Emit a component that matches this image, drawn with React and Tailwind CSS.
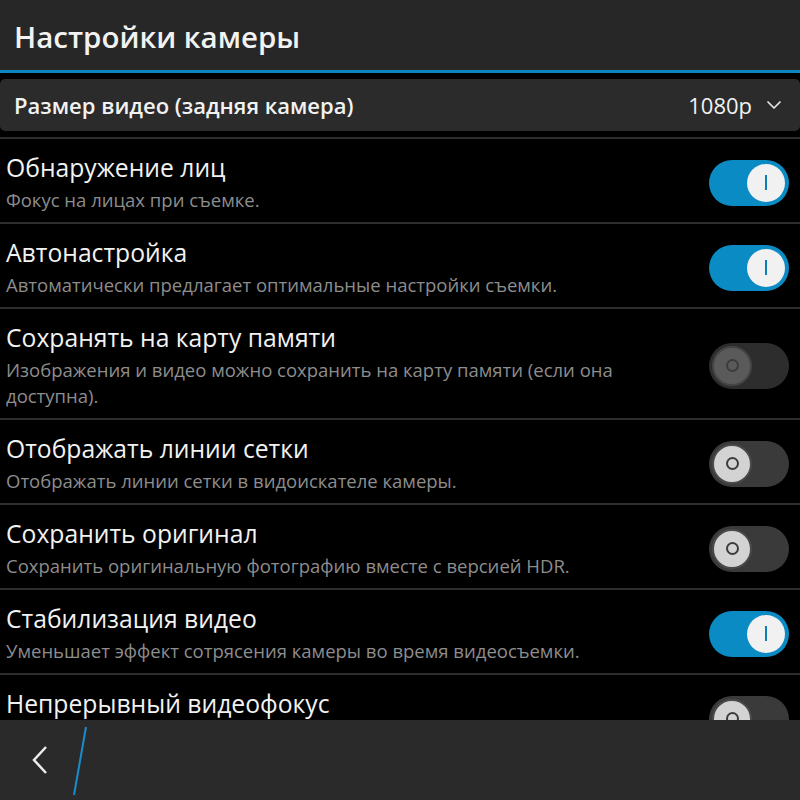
import { ChevronDown } from 'lucide-react';

const settings = [
  { title: 'Обнаружение лиц', desc: 'Фокус на лицах при съемке.', state: 'on' },
  { title: 'Автонастройка', desc: 'Автоматически предлагает оптимальные настройки съемки.', state: 'on' },
  {
    title: 'Сохранять на карту памяти',
    desc: 'Изображения и видео можно сохранить на карту памяти (если она доступна).',
    state: 'disabled',
  },
  { title: 'Отображать линии сетки', desc: 'Отображать линии сетки в видоискателе камеры.', state: 'off' },
  { title: 'Сохранить оригинал', desc: 'Сохранить оригинальную фотографию вместе с версией HDR.', state: 'off' },
  { title: 'Стабилизация видео', desc: 'Уменьшает эффект сотрясения камеры во время видеосъемки.', state: 'on' },
  { title: 'Непрерывный видеофокус', desc: 'Постоянная фокусировка во время видеосъемки.', state: 'off' },
];

function Toggle({ state }) {
  if (state === 'on') {
    return (
      <div className="w-[80px] h-[46px] rounded-full bg-[#0b8bc4] flex items-center justify-end pr-[4px] shrink-0">
        <div className="w-[38px] h-[38px] rounded-full bg-[#f1f1f1] flex items-center justify-center">
          <div className="w-[2px] h-[15px] bg-[#0b7fb6]" />
        </div>
      </div>
    );
  }

  const disabled = state === 'disabled';
  return (
    <div
      className={`w-[80px] h-[46px] rounded-full flex items-center pl-[3px] shrink-0 ${
        disabled ? 'bg-[#2d2d2d]' : 'bg-[#3a3a3a]'
      }`}
    >
      <div
        className={`w-[40px] h-[40px] rounded-full flex items-center justify-center border-[2px] ${
          disabled ? 'bg-[#5a5a5a] border-[#444]' : 'bg-[#d3d3d3] border-[#4a4a4a]'
        }`}
      >
        <div className="w-[13px] h-[13px] rounded-full border-[2px] border-[#3c3c3c]" />
      </div>
    </div>
  );
}

export default function App() {
  return (
    <div
      className="w-[800px] h-[800px] bg-black text-[#f2f2f2] flex flex-col overflow-hidden"
      style={{ fontFamily: '"Open Sans", "Noto Sans", sans-serif' }}
    >
      {/* Header */}
      <div className="h-[70px] bg-[#272727] flex items-center px-[14px] shrink-0">
        <h1 className="text-[29.5px] font-semibold leading-none pt-[4px]">Настройки камеры</h1>
      </div>
      <div className="h-[3px] bg-[#0e86c0] shrink-0" />

      {/* Content */}
      <div className="flex-1 overflow-hidden flex flex-col">
        <div className="pt-[6px] pb-[6px] border-b-2 border-[#2e2e2e]">
          <div className="h-[52px] rounded-[5px] bg-[#2b2b2b] flex items-center justify-between pl-[14px] pr-[14px]">
            <span className="text-[22px] font-semibold">Размер видео (задняя камера)</span>
            <div className="flex items-center gap-[10px]">
              <span className="text-[22px]">1080p</span>
              <ChevronDown className="w-[24px] h-[24px] text-[#e5e5e5]" strokeWidth={1.75} />
            </div>
          </div>
        </div>

        {settings.map((s, i) => (
          <div
            key={i}
            className="flex items-center justify-between pl-[6px] pr-[11px] pt-[13px] pb-[9px] border-b-2 border-[#2e2e2e] shrink-0"
          >
            <div className="flex flex-col">
              <span className="text-[24.7px] leading-[32px] whitespace-nowrap">{s.title}</span>
              <span className="text-[18.5px] leading-[26px] mt-[3px] text-[#8d8d8d] max-w-[640px]">{s.desc}</span>
            </div>
            <Toggle state={s.state} />
          </div>
        ))}
      </div>

      {/* Bottom bar */}
      <div className="h-[80px] bg-[#2a2a2a] shrink-0 flex items-center relative">
        <svg width="800" height="80" viewBox="0 0 800 80" className="absolute inset-0">
          <polyline points="46,27 34,40 46,53" fill="none" stroke="#ececec" strokeWidth="2.5" />
          <line x1="86" y1="7" x2="74" y2="75" stroke="#1a8ccc" strokeWidth="2" />
        </svg>
      </div>
    </div>
  );
}
